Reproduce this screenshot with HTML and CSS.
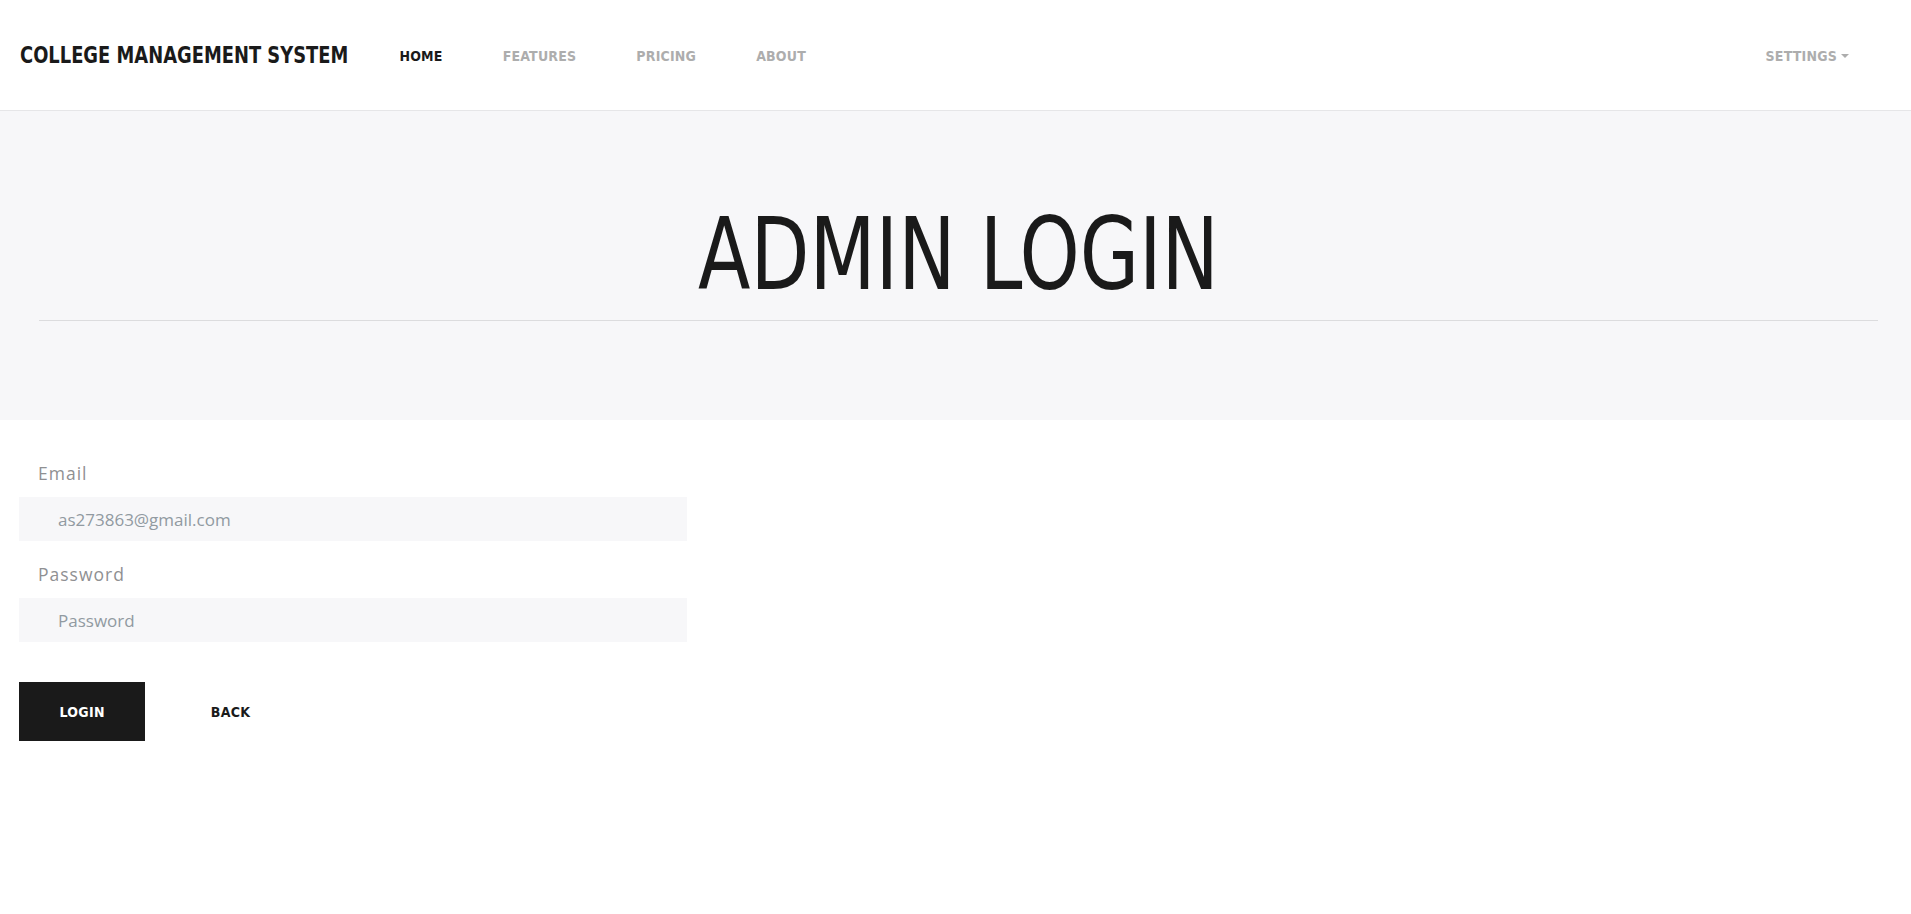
FILE: index.html
```html
<!DOCTYPE html>
<html lang="en">
<head>
<meta charset="utf-8">
<title>Admin Login</title>
<link rel="stylesheet" href="styles.css">
</head>
<body>
<nav class="navbar">
  <a class="brand" href="#">College Management System</a>
  <ul class="nav">
    <li><a class="nav-link active" href="#">Home</a></li>
    <li><a class="nav-link" href="#">Features</a></li>
    <li><a class="nav-link" href="#">Pricing</a></li>
    <li><a class="nav-link" href="#">About</a></li>
  </ul>
  <div class="nav-right">
    <a class="nav-link dropdown" href="#">Settings<span class="caret"></span></a>
  </div>
</nav>
<header class="hero">
  <h1 class="hero-title">Admin Login</h1>
  <hr class="hero-rule">
</header>
<main class="form-wrap">
  <form class="login-form">
    <div class="field">
      <label class="field-label" for="email">Email</label>
      <input class="field-input" id="email" type="email" value="as273863@gmail.com">
    </div>
    <div class="field">
      <label class="field-label" for="password">Password</label>
      <input class="field-input" id="password" type="password" placeholder="Password">
    </div>
    <div class="actions">
      <button class="btn btn-primary" type="button">Login</button>
      <button class="btn btn-link" type="button">Back</button>
    </div>
  </form>
</main>
</body>
</html>
```
FILE: styles.css
```css
html, body {
  margin: 0;
  padding: 0;
  background: #fff;
}
body {
  font-family: "Open Sans", "Noto Sans", sans-serif;
  color: #55595c;
}
a { text-decoration: none; }

.navbar {
  display: flex;
  align-items: center;
  height: 110px;
  border-bottom: 1px solid #e6e6e8;
  padding: 0 0 0 20px;
  box-sizing: content-box;
}
.brand {
  display: inline-block;
  font-family: "DejaVu Sans Condensed", "DejaVu Sans", sans-serif;
  font-size: 22.5px;
  font-weight: 700;
  text-transform: uppercase;
  color: #1a1a1a;
  transform: scaleX(0.884);
  transform-origin: left center;
  margin-right: -22px;
}
.nav {
  display: flex;
  list-style: none;
  margin: 0;
  padding: 0;
}
.nav-link {
  display: block;
  padding: 11px 30px 10px;
  font-family: "DejaVu Sans Condensed", "DejaVu Sans", sans-serif;
  font-size: 14px;
  font-weight: 700;
  text-transform: uppercase;
  letter-spacing: 0.2px;
  color: #adadad;
}
.nav-link.active { color: #1a1a1a; }
.nav-right {
  margin-left: auto;
  margin-right: 32px;
}
.caret {
  display: inline-block;
  width: 0;
  height: 0;
  margin-left: 4px;
  vertical-align: 3px;
  border-top: 4px solid #adadad;
  border-left: 4px solid transparent;
  border-right: 4px solid transparent;
}

.hero {
  background: #f7f7f9;
  padding: 90px 33px 100px 39px;
  height: 309px;
  box-sizing: border-box;
}
.hero-title {
  margin: 0;
  text-align: center;
  font-family: "DejaVu Sans Condensed", "DejaVu Sans", sans-serif;
  font-weight: 400;
  font-size: 99px;
  line-height: 1.1;
  text-transform: uppercase;
  color: #1a1a1a;
  transform: scaleX(0.86);
}
.hero-rule {
  margin: 10px 0 0;
  border: 0;
  border-top: 1px solid #dcdcde;
}

.form-wrap {
  padding: 0 19px;
}
.login-form {
  width: 668px;
  padding-top: 41px;
}
.field { margin-bottom: 21px; }
.field-label {
  display: block;
  padding-left: 19px;
  margin-bottom: 12px;
  font-size: 17.5px;
  letter-spacing: 1px;
  color: #8f9092;
}
.field-input {
  display: block;
  width: 100%;
  height: 44px;
  box-sizing: border-box;
  border: 0;
  background: #f7f7f9;
  padding: 0 39px;
  font-family: "Open Sans", "Noto Sans", sans-serif;
  font-size: 17px;
  color: #919aa1;
  outline: none;
}
.field-input::placeholder { color: #919aa1; }
.actions {
  display: flex;
  gap: 25px;
  margin-top: 40px;
}
.btn {
  height: 59px;
  padding: 0 40.5px;
  border: 0;
  font-family: "DejaVu Sans Condensed", "DejaVu Sans", sans-serif;
  font-size: 14px;
  font-weight: 700;
  letter-spacing: 0.3px;
  text-transform: uppercase;
  cursor: pointer;
}
.btn-primary {
  background: #1a1a1a;
  color: #fff;
}
.btn-link {
  background: transparent;
  color: #1a1a1a;
}
```
